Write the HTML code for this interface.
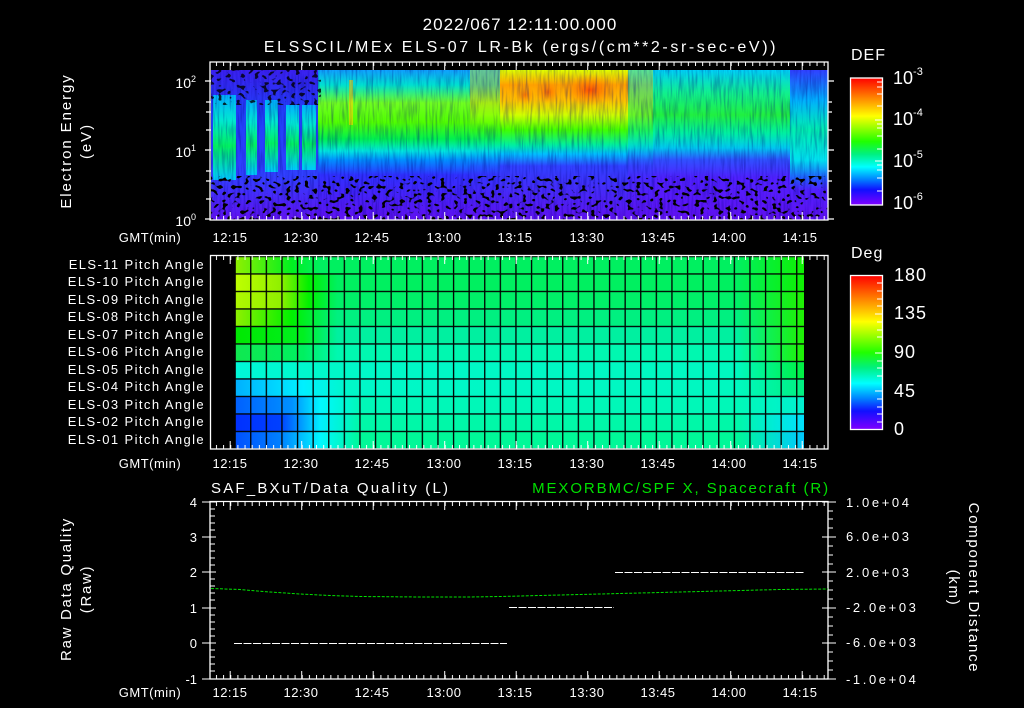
<!DOCTYPE html>
<html><head><meta charset="utf-8"><style>
html,body{margin:0;padding:0;background:#000;width:1024px;height:708px;overflow:hidden}
svg text{font-family:"Liberation Sans",sans-serif;fill:#fff}
</style></head><body>
<svg width="1024" height="708" viewBox="0 0 1024 708" xmlns="http://www.w3.org/2000/svg">
<defs>
<linearGradient id="rb" x1="0" y1="0" x2="0" y2="1">
<stop offset="0" stop-color="#ff0000"/><stop offset="0.15" stop-color="#ff8000"/><stop offset="0.3" stop-color="#ffff00"/>
<stop offset="0.5" stop-color="#20ff00"/><stop offset="0.6" stop-color="#00f080"/><stop offset="0.7" stop-color="#00ffff"/>
<stop offset="0.8" stop-color="#0080ff"/><stop offset="0.88" stop-color="#1010ff"/><stop offset="1" stop-color="#8000ff"/></linearGradient>
<linearGradient id="gA" x1="0" y1="70" x2="0" y2="220" gradientUnits="userSpaceOnUse">
<stop offset="0" stop-color="#3a20f0"/><stop offset="0.3" stop-color="#2040f8"/><stop offset="0.7" stop-color="#3040ff"/><stop offset="1" stop-color="#6010f0"/></linearGradient>
<linearGradient id="gS" x1="0" y1="0" x2="0" y2="1">
<stop offset="0" stop-color="#00b0ff"/><stop offset="0.3" stop-color="#00e8d0"/><stop offset="0.6" stop-color="#00f060"/><stop offset="1" stop-color="#00c8ff"/></linearGradient>
<linearGradient id="gB" x1="0" y1="70" x2="0" y2="220" gradientUnits="userSpaceOnUse">
<stop offset="0" stop-color="#10a0ff"/><stop offset="0.1" stop-color="#00e0d0"/><stop offset="0.22" stop-color="#70ff20"/><stop offset="0.35" stop-color="#50ff00"/>
<stop offset="0.46" stop-color="#00f050"/><stop offset="0.54" stop-color="#00e8e0"/><stop offset="0.6" stop-color="#0090ff"/><stop offset="0.7" stop-color="#3030ff"/><stop offset="1" stop-color="#6010f0"/></linearGradient>
<linearGradient id="gC" x1="0" y1="70" x2="0" y2="220" gradientUnits="userSpaceOnUse">
<stop offset="0" stop-color="#e0ff00"/><stop offset="0.1" stop-color="#ffa000"/><stop offset="0.2" stop-color="#ffc000"/><stop offset="0.3" stop-color="#d0ff00"/>
<stop offset="0.4" stop-color="#40ff00"/><stop offset="0.5" stop-color="#00f0a0"/><stop offset="0.56" stop-color="#00c0ff"/><stop offset="0.64" stop-color="#3040ff"/><stop offset="1" stop-color="#6010f0"/></linearGradient>
<linearGradient id="gD" x1="0" y1="70" x2="0" y2="220" gradientUnits="userSpaceOnUse">
<stop offset="0" stop-color="#00d0f8"/><stop offset="0.15" stop-color="#10f090"/><stop offset="0.3" stop-color="#20f040"/><stop offset="0.42" stop-color="#00f0a0"/>
<stop offset="0.52" stop-color="#00c8f0"/><stop offset="0.6" stop-color="#3050ff"/><stop offset="0.72" stop-color="#5020ff"/><stop offset="1" stop-color="#6010f0"/></linearGradient>
<linearGradient id="gE" x1="0" y1="70" x2="0" y2="220" gradientUnits="userSpaceOnUse">
<stop offset="0" stop-color="#3040ff"/><stop offset="0.2" stop-color="#00b0ff"/><stop offset="0.4" stop-color="#00f0b0"/><stop offset="0.6" stop-color="#00e0f0"/>
<stop offset="0.72" stop-color="#2060ff"/><stop offset="0.8" stop-color="#5020ff"/><stop offset="1" stop-color="#6010f0"/></linearGradient>
<radialGradient id="or"><stop offset="0" stop-color="#ff5000"/><stop offset="1" stop-color="#ff9000" stop-opacity="0"/></radialGradient>
<filter id="nz" x="0" y="0" width="1" height="1">
<feTurbulence type="fractalNoise" baseFrequency="0.22 0.28" numOctaves="1" seed="3"/>
<feColorMatrix values="0 0 0 0 0  0 0 0 0 0  0 0 0 0 0  -14 0 0 0 6"/></filter>
<filter id="st" x="0" y="0" width="1" height="1">
<feTurbulence type="fractalNoise" baseFrequency="0.5 0.04" numOctaves="2" seed="7"/>
<feColorMatrix values="0 0 0 0 0  0 0 0 0 0  0 0 0 0 0.2  2.5 0 0 0 -1.1"/></filter>
<pattern id="tk" x="208.8" y="0" width="7.15" height="10" patternUnits="userSpaceOnUse"><rect x="0" y="0" width="1" height="10" fill="#fff"/></pattern>
<pattern id="tkM" x="229.7" y="0" width="71.5" height="10" patternUnits="userSpaceOnUse"><rect x="0" y="0" width="1" height="10" fill="#fff"/></pattern>
<pattern id="grid" x="234.5" y="255.8" width="15.6" height="17.5" patternUnits="userSpaceOnUse">
<rect x="0" y="0" width="1.3" height="17.5" fill="#000"/><rect x="0" y="0" width="15.6" height="1.3" fill="#000"/></pattern>
<linearGradient id="r1" x1="235" x2="805" gradientUnits="userSpaceOnUse"><stop offset="0" stop-color="#90f000"/><stop offset="0.1" stop-color="#00f020"/><stop offset="0.15" stop-color="#00f060"/><stop offset="0.88" stop-color="#00f060"/><stop offset="1" stop-color="#10f000"/></linearGradient>
<linearGradient id="r2" x1="235" x2="805" gradientUnits="userSpaceOnUse"><stop offset="0" stop-color="#c0ff00"/><stop offset="0.08" stop-color="#90f000"/><stop offset="0.13" stop-color="#00f000"/><stop offset="0.18" stop-color="#00f060"/><stop offset="0.88" stop-color="#00f060"/><stop offset="1" stop-color="#10f000"/></linearGradient>
<linearGradient id="r3" x1="235" x2="805" gradientUnits="userSpaceOnUse"><stop offset="0" stop-color="#b0f800"/><stop offset="0.08" stop-color="#90f000"/><stop offset="0.13" stop-color="#00f000"/><stop offset="0.18" stop-color="#00f068"/><stop offset="0.88" stop-color="#00f068"/><stop offset="1" stop-color="#20f000"/></linearGradient>
<linearGradient id="r4" x1="235" x2="805" gradientUnits="userSpaceOnUse"><stop offset="0" stop-color="#90f000"/><stop offset="0.1" stop-color="#00f000"/><stop offset="0.18" stop-color="#00f080"/><stop offset="0.88" stop-color="#00f080"/><stop offset="1" stop-color="#20f000"/></linearGradient>
<linearGradient id="r5" x1="235" x2="805" gradientUnits="userSpaceOnUse"><stop offset="0" stop-color="#00e800"/><stop offset="0.12" stop-color="#00f020"/><stop offset="0.18" stop-color="#00f0a0"/><stop offset="0.88" stop-color="#00f0a0"/><stop offset="1" stop-color="#20f000"/></linearGradient>
<linearGradient id="r6" x1="235" x2="805" gradientUnits="userSpaceOnUse"><stop offset="0" stop-color="#10e850"/><stop offset="0.12" stop-color="#00f060"/><stop offset="0.18" stop-color="#00f8b0"/><stop offset="0.88" stop-color="#00f8b0"/><stop offset="1" stop-color="#20f000"/></linearGradient>
<linearGradient id="r7" x1="235" x2="805" gradientUnits="userSpaceOnUse"><stop offset="0" stop-color="#00f8d8"/><stop offset="0.18" stop-color="#00f8c8"/><stop offset="0.88" stop-color="#00f8c0"/><stop offset="1" stop-color="#00f040"/></linearGradient>
<linearGradient id="r8" x1="235" x2="805" gradientUnits="userSpaceOnUse"><stop offset="0" stop-color="#00b0ff"/><stop offset="0.12" stop-color="#00f0ff"/><stop offset="0.2" stop-color="#00f8c8"/><stop offset="0.88" stop-color="#00f8c0"/><stop offset="1" stop-color="#00f080"/></linearGradient>
<linearGradient id="r9" x1="235" x2="805" gradientUnits="userSpaceOnUse"><stop offset="0" stop-color="#0060ff"/><stop offset="0.1" stop-color="#0090ff"/><stop offset="0.15" stop-color="#00f8ff"/><stop offset="0.22" stop-color="#00f8b8"/><stop offset="0.88" stop-color="#00f8b8"/><stop offset="1" stop-color="#00f0d0"/></linearGradient>
<linearGradient id="r10" x1="235" x2="805" gradientUnits="userSpaceOnUse"><stop offset="0" stop-color="#0030ff"/><stop offset="0.08" stop-color="#0040ff"/><stop offset="0.15" stop-color="#00f0ff"/><stop offset="0.22" stop-color="#00f8a8"/><stop offset="0.88" stop-color="#00f8a8"/><stop offset="1" stop-color="#00e0ff"/></linearGradient>
<linearGradient id="r11" x1="235" x2="805" gradientUnits="userSpaceOnUse"><stop offset="0" stop-color="#0050ff"/><stop offset="0.08" stop-color="#0080ff"/><stop offset="0.15" stop-color="#00f8ff"/><stop offset="0.22" stop-color="#00f898"/><stop offset="0.88" stop-color="#00f898"/><stop offset="1" stop-color="#00c8ff"/></linearGradient>
</defs>

<text x="520" y="30" font-size="17" letter-spacing="1" text-anchor="middle">2022/067 12:11:00.000</text>
<text x="521" y="52" font-size="16" letter-spacing="2.6" text-anchor="middle">ELSSCIL/MEx ELS-07 LR-Bk  (ergs/(cm**2-sr-sec-eV))</text>

<rect x="211" y="70" width="617" height="150" fill="url(#gA)"/>
<rect x="213" y="95" width="23" height="85" fill="url(#gS)"/>
<rect x="246" y="100" width="11" height="75" fill="url(#gS)"/>
<rect x="265" y="100" width="13" height="72" fill="url(#gS)"/>
<rect x="286" y="105" width="13" height="65" fill="url(#gS)"/>
<rect x="302" y="105" width="14" height="65" fill="url(#gS)"/>
<rect x="318" y="70" width="182" height="150" fill="url(#gB)"/>
<rect x="500" y="70" width="128" height="150" fill="url(#gC)"/>
<rect x="628" y="70" width="162" height="150" fill="url(#gD)"/>
<rect x="790" y="70" width="38" height="150" fill="url(#gE)"/>
<rect x="470" y="70" width="30" height="150" fill="url(#gC)" opacity="0.4"/>
<rect x="628" y="70" width="25" height="150" fill="url(#gC)" opacity="0.4"/>
<ellipse cx="590" cy="90" rx="28" ry="16" fill="url(#or)"/>
<ellipse cx="548" cy="92" rx="14" ry="12" fill="url(#or)" opacity="0.7"/>
<ellipse cx="525" cy="95" rx="10" ry="10" fill="url(#or)" opacity="0.6"/>
<rect x="349" y="80" width="4" height="45" fill="#ffd000" opacity="0.6"/>
<rect x="211" y="70" width="617" height="150" fill="#000" filter="url(#st)" opacity="0.35"/>
<rect x="211" y="70" width="110" height="35" fill="#000" filter="url(#nz)" opacity="0.8"/>
<rect x="211" y="176" width="617" height="44" fill="#000" filter="url(#nz)"/>
<g stroke="#fff" stroke-width="1.3" fill="none">
<path d="M210 62H828V220H210Z"/>
<path d="M205 81H211M205 150H211M205 219H211M828 81H834M828 150H834M828 219H834"/>
<path d="M206 102H211M206 112H211M206 130H211M206 171H211M206 181H211M206 199H211M828 102H832M828 112H832M828 130H832M828 171H832M828 181H832M828 199H832"/>
</g>
<rect x="210" y="62" width="618" height="4" fill="url(#tk)"/>
<rect x="210" y="62" width="618" height="8" fill="url(#tkM)"/>
<rect x="210" y="216" width="618" height="4" fill="url(#tk)"/>
<rect x="210" y="212" width="618" height="8" fill="url(#tkM)"/>
<g font-size="14" text-anchor="end">
<text x="196" y="88">10<tspan dy="-6" font-size="9">2</tspan></text>
<text x="196" y="157">10<tspan dy="-6" font-size="9">1</tspan></text>
<text x="196" y="226">10<tspan dy="-6" font-size="9">0</tspan></text>
</g>
<text transform="translate(71,141) rotate(-90)" font-size="15" letter-spacing="1.9" text-anchor="middle">Electron Energy</text>
<text transform="translate(91,141) rotate(-90)" font-size="15" letter-spacing="1.9" text-anchor="middle">(eV)</text>
<g font-size="13" text-anchor="middle" letter-spacing="0.5">
<text x="150" y="242">GMT(min)</text><text x="230" y="242">12:15</text><text x="301" y="242">12:30</text><text x="372" y="242">12:45</text><text x="444" y="242">13:00</text><text x="515" y="242">13:15</text><text x="587" y="242">13:30</text><text x="658" y="242">13:45</text><text x="729" y="242">14:00</text><text x="800" y="242">14:15</text>
</g>
<text x="851" y="60" font-size="16" letter-spacing="1">DEF</text>
<rect x="850.5" y="78" width="32" height="127" fill="url(#rb)" stroke="#fff" stroke-width="1.3"/>
<g stroke="#fff" stroke-width="1"><path d="M877 82H882M877 87H882M877 94H882M877 106H882M875 120H882M877 124H882M877 128H882M877 136H882M877 149H882M875 161H882M877 165H882M877 170H882M877 178H882M877 191H882"/></g>
<g font-size="18">
<text x="893" y="84">10<tspan dy="-9" font-size="11">-3</tspan></text>
<text x="893" y="125">10<tspan dy="-9" font-size="11">-4</tspan></text>
<text x="893" y="167">10<tspan dy="-9" font-size="11">-5</tspan></text>
<text x="893" y="209">10<tspan dy="-9" font-size="11">-6</tspan></text>
</g>

<rect x="235" y="256" width="570" height="17.5" fill="url(#r1)"/>
<rect x="235" y="273.5" width="570" height="17.5" fill="url(#r2)"/>
<rect x="235" y="291" width="570" height="17.5" fill="url(#r3)"/>
<rect x="235" y="308.5" width="570" height="17.5" fill="url(#r4)"/>
<rect x="235" y="326" width="570" height="17.5" fill="url(#r5)"/>
<rect x="235" y="343.5" width="570" height="17.5" fill="url(#r6)"/>
<rect x="235" y="361" width="570" height="17.5" fill="url(#r7)"/>
<rect x="235" y="378.5" width="570" height="17.5" fill="url(#r8)"/>
<rect x="235" y="396" width="570" height="17.5" fill="url(#r9)"/>
<rect x="235" y="413.5" width="570" height="17.5" fill="url(#r10)"/>
<rect x="235" y="431" width="570" height="18" fill="url(#r11)"/>
<rect x="235" y="256" width="570" height="193" fill="url(#grid)"/>
<rect x="804" y="256" width="1.3" height="193" fill="#000"/>
<rect x="210.5" y="255.5" width="617.5" height="193.5" fill="none" stroke="#fff" stroke-width="1.3"/>
<rect x="210" y="256" width="618" height="4" fill="url(#tk)"/>
<rect x="210" y="256" width="618" height="8" fill="url(#tkM)"/>
<rect x="210" y="445" width="618" height="4" fill="url(#tk)"/>
<rect x="210" y="441" width="618" height="8" fill="url(#tkM)"/>
<g font-size="13" text-anchor="end" letter-spacing="1.4">
<text x="205" y="269">ELS-11 Pitch Angle</text><text x="205" y="286">ELS-10 Pitch Angle</text><text x="205" y="304">ELS-09 Pitch Angle</text><text x="205" y="321">ELS-08 Pitch Angle</text><text x="205" y="339">ELS-07 Pitch Angle</text><text x="205" y="356">ELS-06 Pitch Angle</text><text x="205" y="374">ELS-05 Pitch Angle</text><text x="205" y="391">ELS-04 Pitch Angle</text><text x="205" y="409">ELS-03 Pitch Angle</text><text x="205" y="426">ELS-02 Pitch Angle</text><text x="205" y="444">ELS-01 Pitch Angle</text>
</g>
<g font-size="13" text-anchor="middle" letter-spacing="0.5">
<text x="150" y="468">GMT(min)</text><text x="230" y="468">12:15</text><text x="301" y="468">12:30</text><text x="372" y="468">12:45</text><text x="444" y="468">13:00</text><text x="515" y="468">13:15</text><text x="587" y="468">13:30</text><text x="658" y="468">13:45</text><text x="729" y="468">14:00</text><text x="800" y="468">14:15</text>
</g>
<text x="851" y="258" font-size="16" letter-spacing="1">Deg</text>
<rect x="850.5" y="275.5" width="32" height="154" fill="url(#rb)" stroke="#fff" stroke-width="1.3"/>
<g stroke="#fff" stroke-width="1"><path d="M877 283H882M877 291H882M877 299H882M877 306H882M875 314H882M877 322H882M877 330H882M877 337H882M875 353H882M877 361H882M877 368H882M877 376H882M875 391H882M877 399H882M877 407H882M877 414H882M877 422H882"/></g>
<g font-size="18" letter-spacing="1">
<text x="894" y="281">180</text><text x="894" y="319">135</text><text x="894" y="358">90</text><text x="894" y="397">45</text><text x="894" y="435">0</text>
</g>

<text x="211" y="493" font-size="15" letter-spacing="2.2">SAF_BXuT/Data Quality (L)</text>
<text x="830" y="493" font-size="15" letter-spacing="1.9" text-anchor="end" style="fill:#00e000">MEXORBMC/SPF X, Spacecraft (R)</text>
<path d="M210 501.5H828V679H210Z" fill="none" stroke="#fff" stroke-width="1.3"/>
<rect x="210" y="502" width="618" height="4" fill="url(#tk)"/>
<rect x="210" y="502" width="618" height="8" fill="url(#tkM)"/>
<rect x="210" y="675" width="618" height="4" fill="url(#tk)"/>
<rect x="210" y="671" width="618" height="8" fill="url(#tkM)"/>
<g stroke="#fff" stroke-width="1">
<path d="M202 502H216M202 537H216M202 572H216M202 608H216M202 643H216M202 679H216"/>
<path d="M210 509H215M210 516H215M210 523H215M210 530H215M210 544H215M210 551H215M210 558H215M210 565H215M210 579H215M210 586H215M210 593H215M210 600H215M210 615H215M210 622H215M210 629H215M210 636H215M210 650H215M210 657H215M210 664H215M210 671H215"/>
<path d="M822 502H836M822 537H836M822 572H836M822 608H836M822 643H836M822 679H836"/>
<path d="M828 511H833M828 519H833M828 528H833M828 546H833M828 555H833M828 564H833M828 581H833M828 590H833M828 599H833M828 617H833M828 626H833M828 635H833M828 652H833M828 661H833M828 670H833"/>
</g>
<g font-size="13" text-anchor="end">
<text x="197" y="507">4</text><text x="197" y="542">3</text><text x="197" y="577">2</text><text x="197" y="613">1</text><text x="197" y="648">0</text><text x="197" y="684">-1</text>
</g>
<g font-size="13" letter-spacing="2.6">
<text x="846" y="507">1.0e+04</text><text x="846" y="541">6.0e+03</text><text x="846" y="577">2.0e+03</text><text x="846" y="612">-2.0e+03</text><text x="846" y="647">-6.0e+03</text><text x="846" y="684">-1.0e+04</text>
</g>
<text transform="translate(71,589) rotate(-90)" font-size="15" letter-spacing="1.7" text-anchor="middle">Raw Data Quality</text>
<text transform="translate(91,589) rotate(-90)" font-size="15" letter-spacing="1.7" text-anchor="middle">(Raw)</text>
<text transform="translate(969,588) rotate(90)" font-size="15" letter-spacing="1.7" text-anchor="middle">Component Distance</text>
<text transform="translate(949,588) rotate(90)" font-size="15" letter-spacing="1.7" text-anchor="middle">(km)</text>
<g stroke="#fff" stroke-width="1" stroke-dasharray="8 1.5">
<path d="M234 643.5H507M509 607.5H614M615 572.5H805"/>
</g>
<path d="M211 588.5L240 589.5L270 592L300 594L330 595.5L360 596.5L420 597L470 597L500 596.5L540 595.5L580 594.5L620 593.5L660 592.5L700 591.5L740 590.5L780 589.5L828 589" fill="none" stroke="#00e000" stroke-width="1" stroke-dasharray="3 1.5"/>
<g font-size="13" text-anchor="middle" letter-spacing="0.5">
<text x="150" y="697">GMT(min)</text><text x="230" y="697">12:15</text><text x="301" y="697">12:30</text><text x="372" y="697">12:45</text><text x="444" y="697">13:00</text><text x="515" y="697">13:15</text><text x="587" y="697">13:30</text><text x="658" y="697">13:45</text><text x="729" y="697">14:00</text><text x="800" y="697">14:15</text>
</g>
</svg>
</body></html>
